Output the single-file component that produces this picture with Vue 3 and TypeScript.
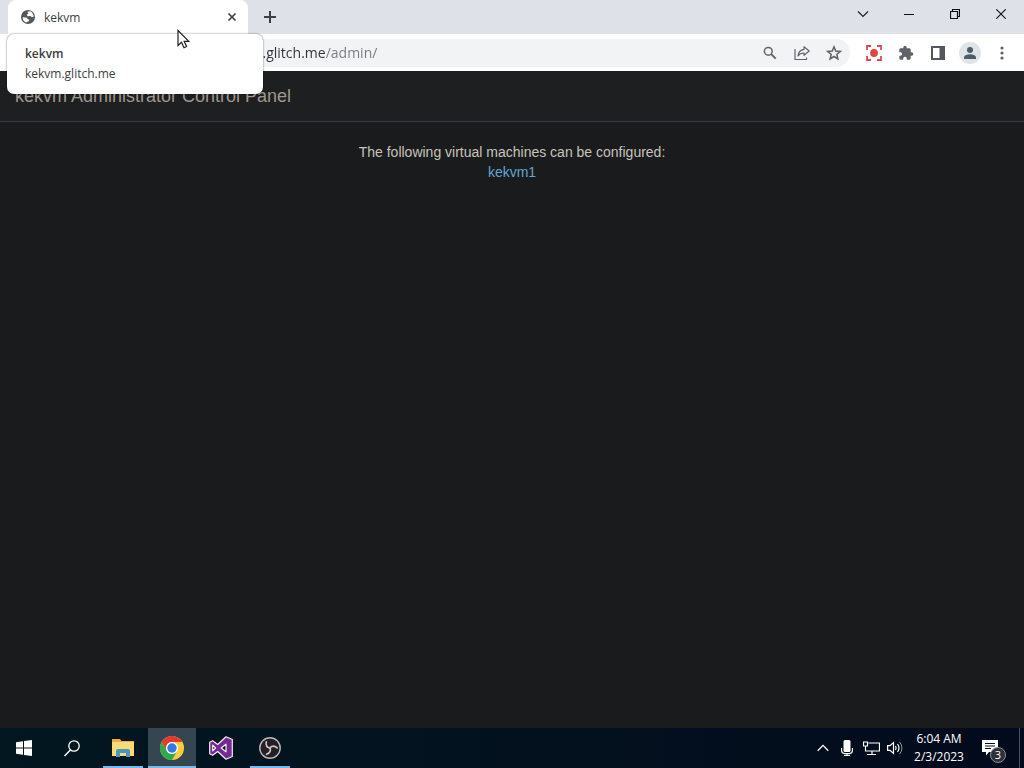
<script setup lang="ts">
import { ref } from 'vue'

const address = ref('kekvm.glitch.me/admin/')
const machines = ['kekvm1']
</script>

<template>
  <div class="desktop">
    <header class="tabstrip">
      <div class="tab">
        <svg class="favicon" viewBox="0 0 24 24"><circle cx="12" cy="12" r="10.500" fill="#54575b" /><path d="M4 12.500l7 .5v2l3 1-1 2.500-3 1.500-2 0c-2.500-1.500-4-4-4-7.500zM11 4l4.500-.5c3 1.500 5 4.500 5 8l-2.500 1-2.500-2-4 .5-1.500-2.500 2.500-1.500z" fill="#fff" /></svg>
        <span class="tab-title">kekvm</span>
        <button class="plain" aria-label="Close tab"><svg width="10" height="10" viewBox="0 0 10 10"><path d="M1.500 1.500l7 7M8.500 1.500l-7 7" stroke="#3c4043" stroke-width="1.700" /></svg></button>
      </div>
      <button class="plain new-tab" aria-label="New tab"><svg width="12" height="12" viewBox="0 0 12 12"><path d="M6 0v12M0 6h12" stroke="#3c4043" stroke-width="2" /></svg></button>
      <div class="window-controls">
        <button class="plain" aria-label="Search tabs"><svg width="12" height="12" viewBox="0 0 12 12"><path d="M1 3.500l5 5 5-5" fill="none" stroke="#222" stroke-width="1.200" /></svg></button>
        <button class="plain" aria-label="Minimize"><svg width="10" height="12" viewBox="0 0 10 12"><path d="M0 6.500h10" stroke="#111" /></svg></button>
        <button class="plain" aria-label="Restore"><svg width="10" height="10" viewBox="0 0 10 10"><path d="M.5 2.500h7v7h-7zM2.500 2.500v-2h7v7h-2" fill="none" stroke="#111" stroke-width="1.200" /></svg></button>
        <button class="plain" aria-label="Close"><svg width="10" height="10" viewBox="0 0 10 10"><path d="M.3.3l9.400 9.400M9.700.3L.3 9.700" stroke="#111" stroke-width="1.100" /></svg></button>
      </div>
    </header>

    <div class="toolbar">
      <div class="omnibox">
        <input v-model="address" class="address" type="text" aria-label="Address and search bar" spellcheck="false" />
        <button class="plain" aria-label="Zoom"><svg width="14" height="14" viewBox="0 0 14 14"><circle cx="5.300" cy="5.300" r="3.900" fill="none" stroke="#5f6368" stroke-width="1.500" /><path d="M8.200 8.200l4.500 4.500" stroke="#5f6368" stroke-width="1.900" /></svg></button>
        <button class="plain" aria-label="Share"><svg width="16" height="16" viewBox="0 0 16 16"><path d="M1 4v10.500h11.500V12.500M10 1.800l5.200 4.200L10 10.300V8c-2.700 0-4.700 1-6 3 .3-3.500 2-6 6-6.600z" fill="none" stroke="#5f6368" stroke-width="1.200" stroke-linejoin="round" /></svg></button>
        <button class="plain" aria-label="Bookmark this page"><svg width="16" height="16" viewBox="0 0 16 16"><path d="M8 1.800l1.700 4.200 4.600.4-3.500 3 1.100 4.500L8 11.500l-3.900 2.400 1.100-4.500-3.500-3 4.600-.4z" fill="none" stroke="#5f6368" stroke-width="1.500" /></svg></button>
      </div>
      <button class="plain" aria-label="Screen recorder"><svg width="16" height="16" viewBox="0 0 16 16"><path d="M1 5V1h4M11 1h4v4M15 11v4h-4M5 15H1v-4" fill="none" stroke="#d94a55" stroke-width="1.800" /><circle cx="8" cy="8" r="3.900" fill="#dc4540" /></svg></button>
      <button class="plain" aria-label="Extensions"><svg width="16" height="16" viewBox="0 0 24 24"><path fill="#5f6368" d="M20.500 11H19V7c0-1.100-.9-2-2-2h-4V3.500a2.500 2.500 0 0 0-5 0V5H4c-1.100 0-2 .9-2 2v3.800h1.500a2.700 2.700 0 0 1 0 5.400H2V20c0 1.100.9 2 2 2h3.800v-1.500a2.700 2.700 0 0 1 5.400 0V22H17c1.100 0 2-.9 2-2v-4h1.500a2.500 2.500 0 0 0 0-5z" /></svg></button>
      <button class="plain" aria-label="Side panel"><svg width="14" height="14" viewBox="0 0 14 14"><path d="M1 1h12v12H1z" fill="none" stroke="#54575b" stroke-width="2" /><path d="M8.500 1H13v12H8.500z" fill="#54575b" /></svg></button>
      <button class="plain avatar" aria-label="Profile"><svg width="14" height="14" viewBox="0 0 14 14"><circle cx="7" cy="4" r="3" fill="#4e5c68" /><path d="M1 13v-1.500C1 9.300 4.500 8.300 7 8.300s6 1 6 3.200V13z" fill="#4e5c68" /></svg></button>
      <button class="plain" aria-label="Menu"><svg width="4" height="14" viewBox="0 0 4 14" fill="#5f6368"><circle cx="2" cy="2" r="1.600" /><circle cx="2" cy="7" r="1.600" /><circle cx="2" cy="12" r="1.600" /></svg></button>
    </div>

    <main class="page">
      <h1 class="page-title">kekvm Administrator Control Panel</h1>
      <section class="machines">
        <p>The following virtual machines can be configured:</p>
        <a v-for="name in machines" :key="name" href="#">{{ name }}</a>
      </section>
    </main>

    <footer class="taskbar">
      <div class="launchers">
        <button class="plain task" aria-label="Start"><svg width="16" height="16" viewBox="0 0 16 16"><path d="M0 2.200l7-1v6.300H0zM8 1.100L16 0v7.500H8zM0 8.500h7v6.300l-7-1zM8 8.500h8V16l-8-1.100z" fill="#fff" /></svg></button>
        <button class="plain task" aria-label="Search"><svg width="16" height="17" viewBox="0 0 16 17"><circle cx="10" cy="6" r="5.200" fill="none" stroke="#fff" stroke-width="1.300" /><path d="M6.400 9.900L.5 16" stroke="#fff" stroke-width="1.400" /></svg></button>
      </div>
      <div class="apps">
        <button class="plain task open" aria-label="File Explorer"><svg width="22" height="18" viewBox="0 0 22 18"><path d="M0 0h8l1.500 2H22v4H0z" fill="#e9ae3c" /><path d="M0 3h22v14H0z" fill="#fbd975" /><path d="M4 18v-6q0-2 2-2h10q2 0 2 2v6h-4v-4H8v4z" fill="#4598bf" /></svg></button>
        <button class="plain task active open" aria-label="Google Chrome">
          <svg width="24" height="24" viewBox="0 0 24 24"><circle cx="12" cy="12" r="12" fill="#ffcd40" /><path d="M1.600 6a12 12 0 0 1 20.800 0H12a6 6 0 0 0-5.200 9z" fill="#e33b2e" /><path d="M1.600 6a12 12 0 0 0 10.400 18l5.200-9a6 6 0 0 1-10.400 0z" fill="#2da94f" /><circle cx="12" cy="12" r="6" fill="#fff" /><circle cx="12" cy="12" r="4.700" fill="#3478e5" /></svg>
        </button>
        <button class="plain task" aria-label="Visual Studio"><svg width="24" height="24" viewBox="0 0 24 24"><path d="M17 .8l6.300 2.700v17L17 23.200l-8.300-7.700-5 3.800L.7 17.800V6.200l3-1.500 5 3.800zM17 8.200L12.200 12l4.800 3.800zM3.700 9.200v5.600L6.500 12z" fill="#742b91" fill-rule="evenodd" stroke="#f4eef6" stroke-width="1.200" stroke-linejoin="round" /></svg></button>
        <button class="plain task open" aria-label="OBS Studio"><svg width="22" height="22" viewBox="0 0 22 22"><circle cx="11" cy="11" r="10.200" fill="#231f22" stroke="#b9b9bb" stroke-width="1.400" /><g fill="none" stroke="#c9c5c8" stroke-width="1.600" stroke-linecap="round"><path d="M11 11.200c-2.800-.7-4.400-3-3.700-6.400" /><path d="M11 11.200c-2.800-.7-4.400-3-3.700-6.400" transform="rotate(120 11 11)" /><path d="M11 11.200c-2.800-.7-4.400-3-3.700-6.400" transform="rotate(240 11 11)" /></g></svg></button>
      </div>
      <div class="tray">
        <button class="plain" aria-label="Show hidden icons"><svg width="12" height="8" viewBox="0 0 12 8"><path d="M.7 6.700L6 1.400l5.300 5.300" fill="none" stroke="#fff" stroke-width="1.300" /></svg></button>
        <button class="plain" aria-label="Microphone"><svg width="12" height="16" viewBox="0 0 12 16"><rect x="2.500" y="0" width="7" height="12" rx="1.500" fill="#fff" /><path d="M.6 8v2.500q0 3 3 3h4.800q3 0 3-3V8M6 13v2M3 15.400h6" fill="none" stroke="#fff" stroke-width="1.100" /></svg></button>
        <button class="plain" aria-label="Network"><svg width="17" height="15" viewBox="0 0 17 15"><path d="M5.500 2h11v8H5M4 13.500h9M9 10v3.500M.5 1h4v4h-4zM2.500 5v5h3" fill="none" stroke="#fff" stroke-width="1.200" /></svg></button>
        <button class="plain" aria-label="Volume"><svg width="16" height="14" viewBox="0 0 16 14"><path d="M.6 4.700H3L6.500 1.500v11L3 9.300H.6zM8.500 5q1.300 2 0 4M10.500 3q3 4 0 8" fill="none" stroke="#fff" stroke-width="1.200" /><path d="M12.700 1q4.500 6 0 12" fill="none" stroke="#8b949f" /></svg></button>
      </div>
      <button class="plain clock"><span>6:04 AM</span><span>2/3/2023</span></button>
      <button class="plain notifications" aria-label="3 notifications">
        <svg width="16" height="16" viewBox="0 0 16 16"><path d="M0 0h16v12H7l-3 3.500V12H0z" fill="#fff" /><path d="M3 3.500h10M3 6h10M3 8.500h6" stroke="#07101e" stroke-width="1.200" /></svg>
        <span class="badge">3</span>
      </button>
    </footer>

    <aside class="tab-card" role="tooltip">
      <strong>kekvm</strong>
      <span>kekvm.glitch.me</span>
    </aside>
    <svg class="cursor" width="14" height="22" viewBox="0 0 14 22"><path d="M1 1.500v15l3.500-3.300 2.500 5.500 2.600-1.200-2.400-5.200h4.600z" fill="#fff" stroke="#222" stroke-width="1.200" /></svg>
  </div>
</template>

<style>
html,
body {
  margin: 0;
  background: #1a1b1c;
}
</style>

<style scoped>
.desktop {
  position: relative;
  display: flex;
  flex-direction: column;
  min-height: 100vh;
  font-family: "Open Sans", "Noto Sans", sans-serif;
  font-size: 12px;
  color: #3c4043;
}
.plain {
  display: flex;
  align-items: center;
  justify-content: center;
  margin: 0;
  padding: 0;
  border: 0;
  background: none;
  color: inherit;
  font: inherit;
}
svg {
  display: block;
  flex: none;
}
.tabstrip {
  display: flex;
  height: 34px;
  padding-left: 8px;
  background: #dee1e7;
}
.tab {
  display: flex;
  align-items: center;
  box-sizing: border-box;
  width: 240px;
  padding: 0 11px 0 12px;
  border-radius: 8px 8px 0 0;
  background: #fff;
}
.favicon {
  width: 16px;
  height: 16px;
}
.tab-title {
  flex: 1;
  margin-left: 8px;
}
.new-tab {
  width: 44px;
}
.window-controls {
  display: flex;
  margin-left: auto;
  height: 28px;
}
.window-controls .plain {
  width: 46px;
}
.toolbar {
  display: flex;
  align-items: center;
  height: 37px;
  box-sizing: border-box;
  padding: 0 6px 0 104px;
  background: #fff;
}
.toolbar .plain {
  width: 32px;
  height: 28px;
}
.omnibox {
  display: flex;
  align-items: center;
  flex: 1;
  height: 28px;
  margin-right: 8px;
  border-radius: 14px;
  background: #f1f3f4;
}
.address {
  flex: 1;
  min-width: 0;
  height: 28px;
  padding: 0 0 1px 116px;
  border: 0;
  outline: 0;
  background: linear-gradient(to right, #303236 221px, #777b80 221px);
  background-clip: text;
  color: transparent;
  font-family: inherit;
  font-size: 14px;
}
.toolbar .avatar {
  width: 22px;
  height: 22px;
  margin: 0 5px;
  border-radius: 50%;
  background: #dfe4e9;
}
.page {
  flex: 1;
  background: #1a1b1c;
  font-family: "Liberation Sans", Arial, sans-serif;
  color: #c8c3bc;
}
.page-title {
  margin: 0;
  padding: 15px;
  border-bottom: 1px solid #393c3e;
  background: #1e1f20;
  color: #9d978e;
  font-size: 18px;
  font-weight: 400;
  line-height: 20px;
}
.machines {
  padding-top: 20px;
  font-size: 14px;
  line-height: 20px;
  text-align: center;
}
.machines p {
  margin: 0;
}
.machines a {
  display: block;
  color: #66a3d3;
  text-decoration: none;
}
.taskbar {
  display: flex;
  height: 40px;
  background: linear-gradient(to right, #021720, #03101e 60%, #020a1b);
  color: #fff;
}
.launchers,
.apps {
  display: flex;
}
.apps {
  gap: 1px;
  margin-left: 3px;
}
.task {
  width: 48px;
}
.open {
  position: relative;
}
.open::after {
  content: "";
  position: absolute;
  right: 4px;
  bottom: 0;
  left: 4px;
  height: 2px;
  background: #76b9ed;
}
.active {
  background: #364650;
}
.active::after {
  right: 0;
  left: 0;
}
.tray {
  display: flex;
  margin-left: auto;
}
.tray .plain {
  width: 24px;
}
.clock {
  flex-direction: column;
  width: 64px;
  line-height: 18px;
}
.notifications {
  position: relative;
  width: 49px;
  margin-right: 4px;
  padding-right: 10px;
  border-right: 1px solid #4a5361;
  box-sizing: border-box;
}
.badge {
  position: absolute;
  top: 19px;
  left: 19px;
  width: 14px;
  height: 14px;
  border: 1px solid #8b9098;
  border-radius: 50%;
  background: #2c3038;
  font-size: 11px;
  line-height: 14px;
  text-align: center;
}
.tab-card {
  position: absolute;
  top: 34px;
  left: 7px;
  display: flex;
  flex-direction: column;
  box-sizing: border-box;
  width: 256px;
  padding: 10px 18px;
  border-radius: 7px;
  background: #fff;
  box-shadow: 0 0 2px rgba(0, 0, 0, 0.6);
  line-height: 20px;
}
.tab-card strong {
  font-weight: 600;
}
.cursor {
  position: absolute;
  top: 29px;
  left: 177px;
}
</style>
